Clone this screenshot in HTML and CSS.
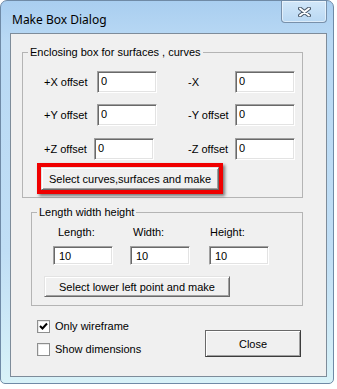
FILE: index.html
```html
<!DOCTYPE html>
<html>
  <head>
    <meta charset="UTF-8">
    <title>Make Box Dialog</title>
    <link rel="stylesheet" href="styles.css">
  </head>
  <body>
    <div class="window">
      <div class="titlebar">
        <span class="title">Make Box Dialog</span>
        <div class="close-x">
          <svg width="13" height="10" viewBox="0 0 13 10">
            <path d="M2 1.5 L11 8.5 M11 1.5 L2 8.5" stroke="#4b5a6b" stroke-width="4" stroke-linecap="round"/>
            <path d="M2 1.5 L11 8.5 M11 1.5 L2 8.5" stroke="#fff" stroke-width="2" stroke-linecap="round"/>
          </svg>
        </div>
      </div>

      <div class="client">
        <fieldset class="group enclose">
          <legend>Enclosing box for surfaces , curves</legend>
          <div class="offsets">
            <div class="row">
              <span class="lbl-a">+X offset</span>
              <input class="field" type="text" value="0">
              <span class="lbl-b">-X</span>
              <input class="field" type="text" value="0">
            </div>
            <div class="row">
              <span class="lbl-a">+Y offset</span>
              <input class="field" type="text" value="0">
              <span class="lbl-b">-Y offset</span>
              <input class="field" type="text" value="0">
            </div>
            <div class="row row-z">
              <span class="lbl-a">+Z offset</span>
              <input class="field" type="text" value="0">
              <span class="lbl-b">-Z offset</span>
              <input class="field" type="text" value="0">
            </div>
          </div>
          <div class="hilite">
            <button class="btn">Select curves,surfaces and make</button>
          </div>
        </fieldset>

        <fieldset class="group dims">
          <legend>Length width height</legend>
          <div class="dim-cols">
            <div class="dim dim-l">
              <span>Length:</span>
              <input class="field small" type="text" value="10">
            </div>
            <div class="dim dim-w">
              <span>Width:</span>
              <input class="field small" type="text" value="10">
            </div>
            <div class="dim dim-h">
              <span>Height:</span>
              <input class="field small" type="text" value="10">
            </div>
          </div>
          <button class="btn point">Select lower left point and make</button>
        </fieldset>

        <div class="bottom">
          <div class="checks">
            <label class="check">
              <span class="box">
                <svg width="9" height="9" viewBox="0 0 9 9">
                  <path d="M1 4 L3.5 6.5 L8 1.5" fill="none" stroke="#000" stroke-width="2"/>
                </svg>
              </span>
              Only wireframe
            </label>
            <label class="check">
              <span class="box"></span>
              Show dimensions
            </label>
          </div>
          <button class="btn close">Close</button>
        </div>
      </div>
    </div>
  </body>
</html>
```

FILE: styles.css
```css
body {
    margin: 0;
    background: #fff;
    font-family: "Liberation Sans", Arial, sans-serif;
    font-size: 11px;
    color: #000;
}

.window {
    box-sizing: border-box;
    width: 334px;
    height: 384px;
    padding: 0 6px 6px 9px;
    border: 1px solid #6f8aa6;
    border-radius: 7px 7px 5px 5px;
    background: linear-gradient(to bottom, #a9cef0 0, #b9d9f4 40px, #c0def5 250px, #d8f2f8 100%);
}

.titlebar {
    display: flex;
    align-items: flex-start;
    height: 32px;
}

.title {
    margin: 12px 0 0 2px;
    font-family: "Noto Sans", sans-serif;
    font-size: 12px;
    line-height: 14px;
    color: #000;
}

.close-x {
    margin-left: auto;
    width: 46px;
    height: 22px;
    box-sizing: border-box;
    border: 1px solid #7890aa;
    border-top: none;
    border-radius: 0 0 4px 4px;
    background: linear-gradient(to bottom, #d2e7f9, #b9d8f3);
    box-shadow: inset 0 0 0 1px rgba(255, 255, 255, 0.5);
    display: flex;
    justify-content: center;
    align-items: center;
}

.client {
    box-sizing: border-box;
    width: 317px;
    height: 344px;
    border: 1px solid #7e8c9a;
    background: #f0f0f0;
    overflow: hidden;
}

.group {
    box-sizing: border-box;
    margin: 0;
    padding: 0;
    border: 1px solid #b4b4b4;
}

.group legend {
    margin-left: 5px;
    padding: 0 2px;
    line-height: 13px;
}

.enclose {
    margin: 12px 0 0 11px;
    width: 281px;
    height: 152px;
}

.offsets {
    display: flex;
    flex-direction: column;
    gap: 11px;
    margin: 12px 0 0 21px;
}

.row {
    display: flex;
    align-items: center;
}

.lbl-a {
    width: 53px;
}

.lbl-b {
    width: 47px;
    margin-left: 31px;
}

.row-z {
    margin-top: 1px;
}

.row-z .lbl-a {
    width: 50px;
}

.row-z .lbl-b {
    margin-left: 34px;
}

.field {
    box-sizing: border-box;
    width: 60px;
    height: 22px;
    margin: 0;
    padding: 0 0 2px 3px;
    font: inherit;
    color: #000;
    background: #fff;
    border: 1px solid;
    border-color: #a0a0a0 #fff #fff #a0a0a0;
    box-shadow: inset 1px 1px 0 #696969, inset -1px -1px 0 #e3e3e3;
    outline: none;
}

.field.small {
    height: 19px;
    padding-bottom: 0;
    padding-left: 5px;
}

.hilite {
    box-sizing: border-box;
    width: 186px;
    height: 31px;
    margin: 3px 0 0 14px;
    border: 4px solid #f00000;
    box-shadow: 2px 2px 3px rgba(0, 0, 0, 0.5);
}

.btn {
    box-sizing: border-box;
    margin: 0;
    padding: 0;
    font: inherit;
    color: #000;
    background: #f0f0f0;
    border: 1px solid;
    border-color: #e3e3e3 #696969 #696969 #e3e3e3;
    box-shadow: inset 1px 1px 0 #fff, inset -1px -1px 0 #a0a0a0;
}

.hilite .btn {
    width: 100%;
    height: 100%;
}

.dims {
    margin: 8px 0 0 20px;
    width: 272px;
    height: 100px;
}

.dim-cols {
    display: flex;
    margin: 7px 0 0 21px;
}

.dim {
    display: flex;
    flex-direction: column;
    gap: 7px;
    line-height: 13px;
}

.dim-l {
    width: 77px;
}

.dim-w {
    width: 79px;
}

.dim-l span {
    padding-left: 5px;
}

.dim-w span {
    padding-left: 3px;
}

.dim-h span {
    padding-left: 1px;
}

.point {
    width: 186px;
    height: 21px;
    margin: 11px 0 0 12px;
}

.bottom {
    display: flex;
    align-items: flex-start;
    margin: 14px 0 0 26px;
}

.checks {
    display: flex;
    flex-direction: column;
    gap: 10px;
    width: 120px;
}

.check {
    display: flex;
    align-items: center;
    gap: 5px;
    height: 13px;
    line-height: 13px;
}

.box {
    box-sizing: border-box;
    width: 13px;
    height: 13px;
    background: #fff;
    border: 1px solid #8e8f8f;
    box-shadow: inset 1px 1px 0 #e8e8e8;
    display: flex;
    justify-content: center;
    align-items: center;
}

.close {
    width: 96px;
    height: 27px;
    margin: 10px 0 0 48px;
    border-color: #696969 #3c3c3c #3c3c3c #696969;
}
```
